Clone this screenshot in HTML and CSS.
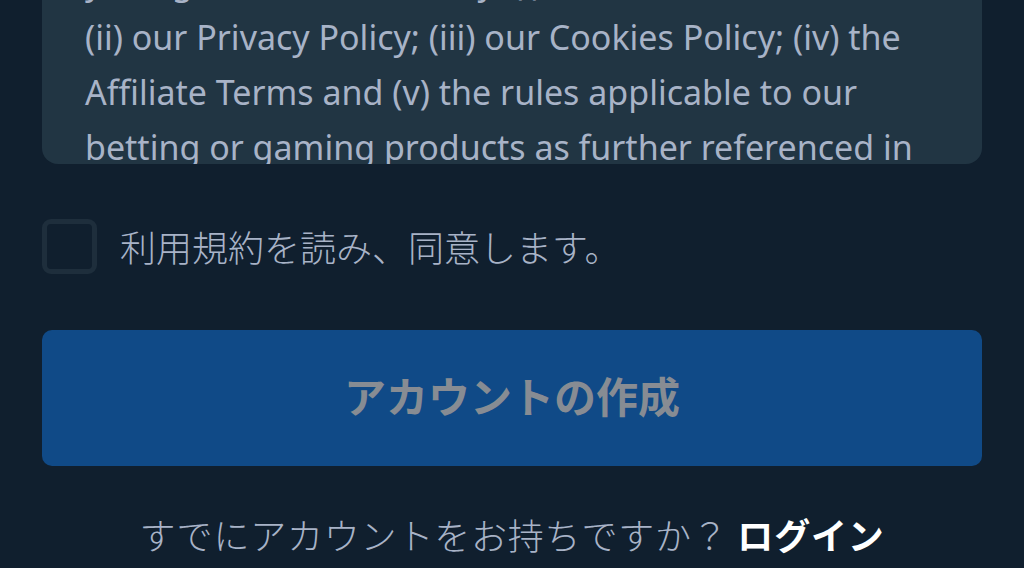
FILE: index.html
```html
<!DOCTYPE html>
<html lang="ja">
<head>
    <meta charset="UTF-8">
    <meta name="viewport" content="width=device-width, initial-scale=1.0">
    <title>アカウントの作成</title>
    <link rel="stylesheet" href="styles.css">
</head>
<body>
<main class="signup">
    <div class="terms">
        <p class="terms-text">you agree to be bound by: (i) our Terms;<br>
        (ii) our Privacy Policy; (iii) our Cookies Policy; (iv) the Affiliate Terms and (v) the rules applicable to our betting or gaming products as further referenced in these Terms.</p>
    </div>

    <label class="agree">
        <input type="checkbox" class="agree-box">
        <span class="agree-text">利用規約を読み、同意します。</span>
    </label>

    <button class="create-btn" type="submit" disabled>アカウントの作成</button>

    <p class="login-prompt">すでにアカウントをお持ちですか？ <a href="#" class="login-link">ログイン</a></p>
</main>
</body>
</html>
```

FILE: styles.css
```css
body {
    margin: 0;
    background-color: #101f2e;
    font-family: "Noto Sans", "Noto Sans CJK JP", sans-serif;
    color: #a8b3c7;
}

.signup {
    display: flex;
    flex-direction: column;
    padding: 0 42px;
}

.terms {
    height: 164px;
    overflow: hidden;
    background-color: #213543;
    border-radius: 0 0 16px 16px;
    padding: 0 43px;
}

.terms-text {
    margin: -45px 0 0;
    font-size: 34px;
    line-height: 55px;
    color: #a8b3c7;
}

.agree {
    display: flex;
    align-items: center;
    gap: 23px;
    margin-top: 55px;
    cursor: pointer;
}

.agree-box {
    appearance: none;
    flex-shrink: 0;
    margin: 0;
    width: 55px;
    height: 55px;
    border: 5px solid #1e2e3c;
    border-radius: 9px;
    background-color: transparent;
    box-sizing: border-box;
}

.agree-text {
    font-family: "Noto Sans CJK JP", sans-serif;
    font-weight: 300;
    font-size: 36px;
    line-height: 55px;
    color: #a8b3c7;
}

.create-btn {
    margin-top: 56px;
    height: 136px;
    border: none;
    border-radius: 10px;
    background-color: #104a87;
    color: #878c93;
    font-family: "Noto Sans CJK JP", sans-serif;
    font-weight: bold;
    font-size: 42px;
    line-height: 1;
    padding: 0 0 6px;
}

.login-prompt {
    margin: 43px 0 0;
    text-align: center;
    font-family: "Noto Sans CJK JP", sans-serif;
    font-weight: 300;
    font-size: 36px;
    line-height: 50px;
    letter-spacing: 0.8px;
    color: #a8b3c7;
}

.login-link {
    color: #ffffff;
    font-weight: bold;
    text-decoration: none;
}
```
